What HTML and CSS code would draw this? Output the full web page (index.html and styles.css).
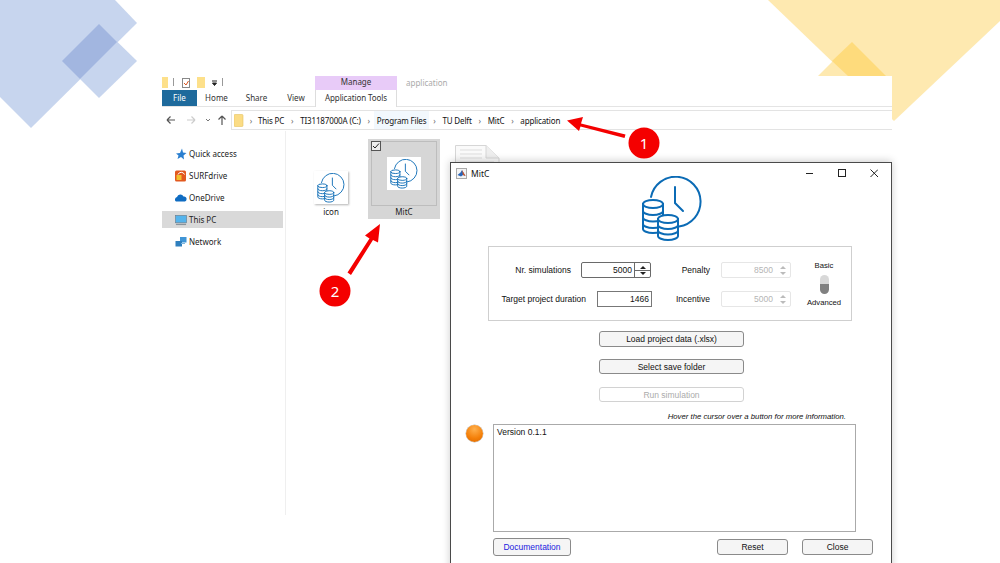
FILE: index.html
```html
<!DOCTYPE html>
<html>
<head>
    <meta charset="utf-8">
    <title>MitC</title>
    <link rel="stylesheet" href="styles.css">
</head>
<body>
    <svg width="0" height="0" class="defs">
        <symbol id="mitc" viewBox="0 0 60 66">
            <g fill="#fff" stroke="#0b6bb5" stroke-width="2" stroke-linecap="round">
                <path d="M9 21A25 25 0 1 1 37 50.5" fill="none"/>
                <path d="M33 11V27L41 35" fill="none"/>
                <path d="M1 28V53C1 55 5.500 57 11 57S21 55 21 53V28Z"/>
                <ellipse cx="11" cy="28" rx="10" ry="4"/>
                <path d="M1 35C1 37 5.500 39 11 39S21 37 21 35M1 41.500C1 43.500 5.500 45.500 11 45.500S21 43.500 21 41.500M1 48C1 50 5.500 52 11 52S21 50 21 48" fill="none"/>
                <path d="M16 43V60C16 62 20.500 64 26 64S36 62 36 60V43Z"/>
                <ellipse cx="26" cy="43" rx="10" ry="4"/>
                <path d="M16 49C16 51 20.500 53 26 53S36 51 36 49M16 54.500C16 56.500 20.500 58.500 26 58.500S36 56.500 36 54.500" fill="none"/>
            </g>
        </symbol>
    </svg>

    <!-- slide decoration -->
    <svg class="decor" width="1000" height="563" viewBox="0 0 1000 563">
        <polygon points="0,0 115,0 137,23 31,128 0,97" fill="#c7d5ee"/>
        <polygon points="99,24 137,61 99,98 62,61" fill="#c7d5ee"/>
        <polygon points="99,24 117,42 80,79 62,61" fill="#a2b6e0"/>
        <polygon points="768,0 1000,0 1000,21 894,121" fill="#fee9b0"/>
        <polygon points="852,42 886,76 818,76" fill="#fee9b0"/>
        <polygon points="852,42 886,76 848,76 832,61" fill="#fedb7c"/>
    </svg>

    <!-- explorer window -->
    <div class="explorer">
        <div class="titlerow">
            <svg class="quick" width="62" height="14" viewBox="0 0 62 14">
                <rect x="0" y="1" width="6" height="11" fill="#fde08a"/>
                <rect x="11" y="2" width="1" height="8" fill="#999"/>
                <rect x="20.500" y="2.500" width="7" height="9" fill="#fff" stroke="#888"/>
                <path d="M22 7L24 9L26.500 5" fill="none" stroke="#d9541e"/>
                <rect x="35" y="1" width="8" height="11" fill="#fde08a"/>
                <path d="M50 5H55M50.500 7H54.500L52.500 9.500Z" stroke="#222" fill="#222" stroke-width="1"/>
                <rect x="60" y="2" width="1" height="8" fill="#999"/>
            </svg>
            <div class="manage">Manage</div>
            <div class="apptitle">application</div>
        </div>
        <div class="tabs">
            <div class="tab filetab">File</div>
            <div class="tab home">Home</div>
            <div class="tab share">Share</div>
            <div class="tab view">View</div>
            <div class="tab apptools">Application Tools</div>
        </div>
        <div class="addrrow">
            <svg class="nav" width="69" height="20" viewBox="0 0 69 20">
                <path d="M5 10H13M5 10L8.500 6.500M5 10L8.500 13.500" fill="none" stroke="#555" stroke-width="1.200"/>
                <path d="M33 10H25M33 10L29.500 6.500M33 10L29.500 13.500" fill="none" stroke="#ccc" stroke-width="1.200"/>
                <path d="M44 9L46 11L48 9" fill="none" stroke="#777"/>
                <path d="M60 15V6M60 6L56.500 9.500M60 6L63.500 9.500" fill="none" stroke="#555" stroke-width="1.200"/>
            </svg>
            <div class="addr">
                <svg class="addrfolder" width="10" height="13" viewBox="0 0 10 13"><rect width="9" height="12" y="0.500" rx="1" fill="#fbdc85" stroke="#e6c25f" stroke-width="0.600"/></svg>
                <span class="chev">›</span><span>This PC</span>
                <span class="chev">›</span><span>TI31187000A (C:)</span>
                <span class="chev">›</span><span class="crumb-hi">Program Files</span>
                <span class="chev">›</span><span>TU Delft</span>
                <span class="chev">›</span><span>MitC</span>
                <span class="chev">›</span><span>application</span>
            </div>
        </div>
        <div class="main">
            <div class="side">
                <div class="navitem">
                    <svg width="12" height="12" viewBox="0 0 12 12"><path d="M7 0.500L8 4.500L11.500 5L8.500 7.500L9 11.500L6 9L2.500 11L3.500 7.500L1 5.500L5 5Z" fill="#2a7fd0"/></svg>
                    <span>Quick access</span>
                </div>
                <div class="navitem">
                    <svg width="12" height="12" viewBox="0 0 12 12"><rect width="11" height="11" y="0.500" rx="1.500" fill="#e2591f"/><path d="M3 4.500A3.500 3.500 0 0 1 9.500 4.500" fill="none" stroke="#fff"/><rect x="1.500" y="5" width="5" height="5" fill="#f2c12e"/></svg>
                    <span>SURFdrive</span>
                </div>
                <div class="navitem">
                    <svg width="12" height="12" viewBox="0 0 12 12"><path d="M1 9.500A2.500 2.500 0 0 1 2 5A3.500 3.500 0 0 1 8.500 4.500A2.500 2.500 0 0 1 11.500 7.500A2 2 0 0 1 10 9.500Z" fill="#0f6cc2"/></svg>
                    <span>OneDrive</span>
                </div>
                <div class="navitem selected">
                    <svg width="12" height="12" viewBox="0 0 13 12"><rect x="0.500" y="1" width="12" height="8" fill="#55b4ec" stroke="#6a7f90" stroke-width="0.700"/><rect x="1" y="10" width="11" height="1.500" fill="#8a949c"/></svg>
                    <span>This PC</span>
                </div>
                <div class="navitem">
                    <svg width="12" height="12" viewBox="0 0 12 12"><rect x="5" y="1" width="6.500" height="5.500" fill="#3f95d6"/><rect x="0.500" y="5" width="6.500" height="5.500" fill="#2f7fbe"/><rect x="6" y="7" width="4" height="1" fill="#7db6de"/></svg>
                    <span>Network</span>
                </div>
            </div>
            <div class="files">
                <div class="file plain">
                    <div class="thumb shadowed"><svg width="28" height="30"><use href="#mitc"/></svg></div>
                    <div class="filename">icon</div>
                </div>
                <div class="file sel">
                    <span class="check">
                        <svg width="10" height="10" viewBox="0 0 10 10"><rect x="0.500" y="0.500" width="9" height="9" fill="#eee" stroke="#555"/><path d="M2 5L4 7L8 2.500" fill="none" stroke="#222"/></svg>
                    </span>
                    <div class="thumb"><svg width="28" height="30"><use href="#mitc"/></svg></div>
                    <div class="filename">MitC</div>
                </div>
                <svg class="docfile" width="45" height="40" viewBox="0 0 45 40">
                    <path d="M0.500 0.500H31L44 13V39.500H0.500Z" fill="#fafafa" stroke="#d6d6d6"/>
                    <path d="M31 0.500V13H44" fill="#eee" stroke="#d6d6d6"/>
                    <path d="M5 5H27M5 9H27M5 13H27M5 17H39" stroke="#ddd"/>
                </svg>
            </div>
        </div>
    </div>

    <!-- MitC app window -->
    <div class="app">
        <div class="apphead">
            <svg width="11" height="11" viewBox="0 0 11 11"><rect x="0.500" y="0.500" width="10" height="10" fill="#f4f4f4" stroke="#aaa"/><path d="M1.500 7L4.500 4.500L6 2L8 5.500L9.500 8L7 7L5 8.500Z" fill="#2a66b8"/><path d="M6 2L8 5.500L9.500 8L7 7Z" fill="#d9541e"/></svg>
            <span class="apptext">MitC</span>
            <svg class="winbtns" width="72" height="10" viewBox="0 0 72 10">
                <path d="M0 5.500H7" stroke="#222"/>
                <rect x="32.500" y="1.500" width="7" height="7" fill="none" stroke="#222"/>
                <path d="M64.500 1.500L72 9M72 1.500L64.500 9" stroke="#222" fill="none"/>
            </svg>
        </div>
        <svg class="logo" width="60" height="66"><use href="#mitc"/></svg>

        <div class="panel">
            <div class="params">
                <div class="row">
                    <div class="cell-left">
                        <label class="lbl gap-nr">Nr. simulations</label>
                        <div class="spin">
                            <span class="val">5000</span>
                            <span class="arrows"><i class="up"></i><i class="down"></i></span>
                        </div>
                    </div>
                    <div class="cell-right">
                        <label class="lbl">Penalty</label>
                        <div class="spin off">
                            <span class="val">8500</span>
                            <span class="arrows"><i class="up"></i><i class="down"></i></span>
                        </div>
                    </div>
                </div>
                <div class="row">
                    <div class="cell-left">
                        <label class="lbl gap-target">Target project duration</label>
                        <div class="numfield">1466</div>
                    </div>
                    <div class="cell-right">
                        <label class="lbl">Incentive</label>
                        <div class="spin off">
                            <span class="val">5000</span>
                            <span class="arrows"><i class="up"></i><i class="down"></i></span>
                        </div>
                    </div>
                </div>
            </div>
            <div class="mode">
                <span class="lbl small">Basic</span>
                <span class="toggle"></span>
                <span class="lbl small">Advanced</span>
            </div>
        </div>

        <div class="actions">
            <button class="btn">Load project data (.xlsx)</button>
            <button class="btn short">Select save folder</button>
            <button class="btn short disabled">Run simulation</button>
        </div>

        <div class="note">Hover the cursor over a button for more information.</div>
        <div class="msgrow">
            <span class="lamp"></span>
            <div class="log">Version 0.1.1</div>
        </div>
        <div class="foot">
            <button class="btn doc">Documentation</button>
            <button class="btn small-btn reset">Reset</button>
            <button class="btn small-btn">Close</button>
        </div>
    </div>

    <!-- callouts -->
    <svg class="callouts" width="1000" height="563" viewBox="0 0 1000 563">
        <g fill="#f40000" stroke="none">
            <path d="M625.500 134.500L581 123.500L583 117L567 120.500L579 131L580.500 126.500L624.500 138Z"/>
            <path d="M347.500 272.500L369.500 238.500L365 235.500L380 224L378 242.500L373 240L351 275Z"/>
            <circle cx="644" cy="143" r="15.500"/>
            <circle cx="335" cy="291" r="15.500"/>
        </g>
        <text x="644" y="148.500" class="num">1</text>
        <text x="335" y="296.500" class="num">2</text>
    </svg>
</body>
</html>
```

FILE: styles.css
```css
body {
    margin: 0;
    width: 1000px;
    height: 563px;
    overflow: hidden;
    position: relative;
    background: #fff;
    font-family: "Noto Sans", sans-serif;
    color: #1a1a1a;
}

.defs {
    position: absolute;
}

.decor, .callouts {
    position: absolute;
    left: 0;
    top: 0;
}

.num {
    font: 15px "Noto Sans", sans-serif;
    fill: #fff;
    text-anchor: middle;
}

/* explorer */
.explorer {
    position: absolute;
    left: 162px;
    top: 76px;
    width: 730px;
    height: 439px;
    background: #fff;
    font-size: 8px;
    display: flex;
    flex-direction: column;
}

.titlerow {
    display: flex;
    height: 14px;
}

.quick {
    flex: none;
}

.manage {
    margin-left: 91px;
    width: 82px;
    text-align: center;
    line-height: 11px;
    background: #e8cbf8;
    color: #333;
}

.apptitle {
    margin-left: 9px;
    line-height: 13px;
    color: #aaa;
}

.tabs {
    display: flex;
    height: 16px;
    border-bottom: 1px solid #e4e4e4;
    box-sizing: content-box;
}

.tab {
    text-align: center;
    line-height: 16px;
    color: #333;
}

.filetab {
    width: 35px;
    background: #1e6a9c;
    color: #fff;
}

.home { width: 39px; }
.share { width: 41px; }
.view { width: 38px; }

.apptools {
    width: 80px;
    border-left: 1px solid #ddd;
    border-right: 1px solid #ddd;
    height: 17px;
    background: #fff;
    letter-spacing: -0.1px;
}

.addrrow {
    display: flex;
    margin: 3px 0 1px;
}

.nav {
    flex: none;
}

.addr {
    flex: 1;
    box-sizing: border-box;
    height: 20px;
    border: 1px solid #e3e3e3;
    border-right: 0;
    display: flex;
    align-items: center;
    padding-left: 2px;
    color: #111;
    letter-spacing: -0.15px;
}

.addrfolder {
    flex: none;
}

.chev {
    width: 16px;
    text-align: center;
    color: #666;
}

.addrfolder + .chev {
    width: 14px;
}

.crumb-hi {
    align-self: stretch;
    display: flex;
    align-items: center;
    background: #f2f8fd;
    box-shadow: 3px 0 0 #f2f8fd, -3px 0 0 #f2f8fd;
}

.main {
    flex: 1;
    display: flex;
}

.side {
    width: 123px;
    border-right: 1px solid #efefef;
    padding-top: 14px;
    display: flex;
    flex-direction: column;
    gap: 5px;
}

.navitem {
    height: 17px;
    margin-right: 2px;
    display: flex;
    align-items: center;
    gap: 2px;
    padding-left: 13px;
    color: #222;
}

.navitem.selected {
    background: #d9d9d9;
}

.files {
    display: flex;
    align-items: flex-start;
    padding: 8px 0 0 9px;
    gap: 1px;
    color: #222;
}

.file {
    width: 72px;
    height: 80px;
    box-sizing: border-box;
    display: flex;
    flex-direction: column;
    align-items: center;
    position: relative;
}

.file.plain {
    padding-top: 32px;
}

.file.plain .filename {
    margin-top: 3px;
}

.file.sel {
    padding-top: 18px;
    background: #d6d6d6;
}

.file.sel::before {
    content: "";
    position: absolute;
    left: 3px;
    right: 3px;
    top: 2px;
    height: 65px;
    border: 1px solid #bdbdbd;
    box-sizing: border-box;
}

.file.sel .filename {
    margin-top: 17px;
}

.check {
    position: absolute;
    left: 3px;
    top: 2px;
    line-height: 0;
}

.thumb {
    width: 34px;
    height: 33px;
    background: #fff;
    display: flex;
    align-items: center;
    justify-content: center;
    position: relative;
}

.shadowed {
    box-shadow: 1px 1px 2px rgba(0, 0, 0, .3);
}

.filename {
    line-height: 10px;
    position: relative;
}

.docfile {
    margin: 6px 0 0 14px;
    flex: none;
}

/* app window */
.app {
    position: absolute;
    left: 450px;
    top: 162px;
    width: 442px;
    height: 420px;
    box-sizing: border-box;
    background: #fff;
    border: 1px solid #4a4a4a;
    box-shadow: 0 -1px 8px rgba(0, 0, 0, .2);
    font-family: "Liberation Sans", Arial, sans-serif;
    font-size: 8.500px;
    color: #111;
    display: flex;
    flex-direction: column;
}

.apphead {
    height: 20px;
    flex: none;
    display: flex;
    align-items: center;
    padding-left: 5px;
    font-family: "Noto Sans", sans-serif;
}

.apptext {
    margin-left: 4px;
    font-size: 8.500px;
}

.winbtns {
    margin-left: 317px;
}

.logo {
    flex: none;
    margin: -7px 0 0 191px;
}

.panel {
    flex: none;
    margin: 4px 0 0 37px;
    width: 364px;
    height: 75px;
    box-sizing: border-box;
    border: 1px solid #cfcfcf;
    display: flex;
}

.params {
    width: 302px;
    padding-top: 15px;
    display: flex;
    flex-direction: column;
    gap: 13px;
}

.row {
    display: flex;
    height: 16px;
}

.cell-left {
    width: 163px;
    display: flex;
    justify-content: flex-end;
    align-items: center;
}

.cell-right {
    width: 139px;
    display: flex;
    justify-content: flex-end;
    align-items: center;
    gap: 11px;
}

.gap-nr { margin-right: 10px; }
.gap-target { margin-right: 11px; }

.spin {
    width: 70px;
    height: 16px;
    box-sizing: border-box;
    border: 1px solid #6a6a6a;
    border-radius: 2px;
    display: flex;
    align-items: center;
}

.cell-left .spin {
    margin-right: 1px;
}

.val {
    flex: 1;
    text-align: right;
    padding-right: 2px;
}

.arrows {
    width: 15px;
    height: 100%;
    border-left: 1px solid #6a6a6a;
    background: linear-gradient(#6a6a6a, #6a6a6a) center / 100% 1px no-repeat;
    display: flex;
    flex-direction: column;
    align-items: center;
    justify-content: center;
    gap: 3px;
}

.arrows i {
    width: 0;
    height: 0;
    border-left: 3px solid transparent;
    border-right: 3px solid transparent;
}

.arrows .up { border-bottom: 3px solid #222; }
.arrows .down { border-top: 3px solid #222; }

.spin.off {
    border-color: #e6e6e6;
    color: #b5b5b5;
}

.spin.off .arrows {
    border-left: 0;
    background: none;
}

.spin.off .up { border-bottom-color: #bbb; }
.spin.off .down { border-top-color: #bbb; }

.numfield {
    width: 55px;
    height: 16px;
    box-sizing: border-box;
    border: 1px solid #777;
    border-top-width: 1.500px;
    text-align: right;
    line-height: 14px;
    padding-right: 2px;
}

.mode {
    margin-left: 15px;
    width: 36px;
    padding-top: 14px;
    display: flex;
    flex-direction: column;
    align-items: center;
    gap: 4px;
}

.small {
    font-size: 7.700px;
    line-height: 10px;
    white-space: nowrap;
}

.toggle {
    width: 9px;
    height: 19px;
    border-radius: 5px;
    background: linear-gradient(#d8d8d8 0 45%, #808080 45%);
}

.actions {
    flex: none;
    margin: 10px 0 0 148px;
    width: 145px;
    display: flex;
    flex-direction: column;
    gap: 12px;
}

.btn {
    height: 16px;
    padding: 0;
    box-sizing: border-box;
    background: #f5f5f5;
    border: 1px solid #8a8a8a;
    border-radius: 3px;
    font: 8.500px "Liberation Sans", Arial, sans-serif;
    color: #111;
}

.btn.short {
    height: 15px;
    margin-bottom: 1px;
}

.btn.disabled {
    background: #fff;
    border-color: #d2d2d2;
    color: #ababab;
}

.note {
    flex: none;
    margin-top: 9px;
    height: 12px;
    padding-right: 45px;
    text-align: right;
    font-style: italic;
    font-size: 7.760px;
    line-height: 10px;
}

.msgrow {
    flex: none;
    display: flex;
    padding-left: 15px;
}

.lamp {
    flex: none;
    width: 17px;
    height: 17px;
    margin: 1px 10px 0 0;
    border-radius: 50%;
    background: radial-gradient(circle at 50% 25%, #ffb04d, #f47f08 60%, #d96800);
    box-shadow: 0 0 0 .5px #b5b5b5;
}

.log {
    width: 363px;
    height: 108px;
    box-sizing: border-box;
    border: 1px solid #aaa;
    padding: 2px 3px;
    line-height: 10px;
}

.foot {
    flex: none;
    margin-top: 6px;
    padding: 0 18px 0 42px;
    display: flex;
    align-items: center;
    gap: 14px;
}

.doc {
    width: 78px;
    height: 18px;
    color: #1a1ae0;
}

.small-btn {
    width: 71px;
}

.reset {
    margin-left: auto;
}
```
